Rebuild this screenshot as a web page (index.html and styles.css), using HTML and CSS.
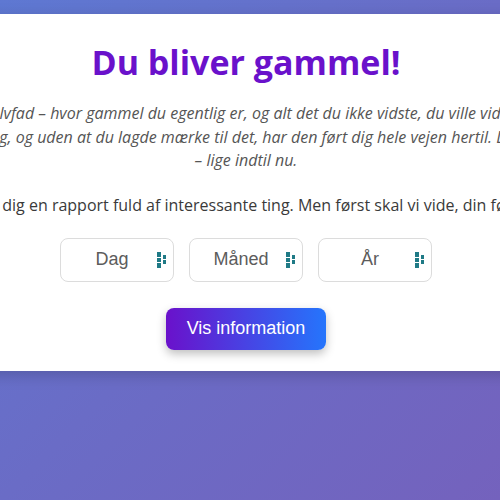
FILE: index.html
```html
<!DOCTYPE html>
<html lang="da">
<head>
<meta charset="utf-8">
<title>Du bliver gammel!</title>
<link rel="stylesheet" href="styles.css">
</head>
<body>
<main class="card">
  <h1 class="title">Du bliver gammel!</h1>
  <p class="intro">Tiden er et halvfad – hvor gammel du egentlig er, og alt det du ikke vidste, du ville vide om din tid.<br>Tiden gik sin stille gang, og uden at du lagde mærke til det, har den ført dig hele vejen hertil. Dag for dag, år for år<br>– lige indtil nu.</p>
  <p class="lead">Så vil vi give dig en rapport fuld af interessante ting. Men først skal vi vide, din fødselsdato.</p>
  <div class="fields">
    <div class="select"><span class="label">Dag</span><svg class="arrow" width="10" height="16" viewBox="0 0 10 16"><rect x="0" y="0" width="4" height="5"/><rect x="0" y="6" width="4" height="4"/><rect x="0" y="11" width="4" height="5"/><rect x="6" y="3" width="3" height="4"/><rect x="6" y="8" width="3" height="4"/></svg></div>
    <div class="select"><span class="label">Måned</span><svg class="arrow" width="10" height="16" viewBox="0 0 10 16"><rect x="0" y="0" width="4" height="5"/><rect x="0" y="6" width="4" height="4"/><rect x="0" y="11" width="4" height="5"/><rect x="6" y="3" width="3" height="4"/><rect x="6" y="8" width="3" height="4"/></svg></div>
    <div class="select"><span class="label">År</span><svg class="arrow" width="10" height="16" viewBox="0 0 10 16"><rect x="0" y="0" width="4" height="5"/><rect x="0" y="6" width="4" height="4"/><rect x="0" y="11" width="4" height="5"/><rect x="6" y="3" width="3" height="4"/><rect x="6" y="8" width="3" height="4"/></svg></div>
  </div>
  <button class="btn" type="button">Vis information</button>
</main>
</body>
</html>
```

FILE: styles.css
```css
html, body {
  margin: 0;
  padding: 0;
  height: 100%;
  overflow: hidden;
}
body {
  background: linear-gradient(135deg, #5e78d2 0%, #6a6cc6 50%, #7462bd 100%);
  display: flex;
  justify-content: center;
  align-items: flex-start;
  padding-top: 14px;
  box-sizing: border-box;
  font-family: "Open Sans", "Noto Sans", sans-serif;
}
.card {
  flex: 0 0 900px;
  width: 900px;
  margin-right: 8px;
  background: #fff;
  box-sizing: border-box;
  padding: 25px 0 21px;
  text-align: center;
  box-shadow: 0 4px 14px rgba(0, 0, 0, 0.18);
  display: flex;
  flex-direction: column;
  align-items: center;
}
.title {
  margin: 0;
  font-family: "Open Sans", sans-serif;
  font-size: 34px;
  line-height: 46px;
  font-weight: 700;
  color: #6a11cb;
}
.intro {
  margin: 17px 0 0;
  font-size: 16px;
  line-height: 23.5px;
  font-style: italic;
  color: #555;
  white-space: nowrap;
}
.lead {
  margin: 20px 0 0;
  font-size: 16px;
  line-height: 24px;
  color: #3a3a3a;
  white-space: nowrap;
}
.fields {
  display: flex;
  gap: 15px;
  margin-top: 21px;
}
.select {
  width: 114px;
  height: 44px;
  box-sizing: border-box;
  border: 1px solid #dcdcdc;
  border-radius: 8px;
  display: flex;
  align-items: center;
  padding: 0 6px 0 6px;
  font-family: "Liberation Sans", Arial, sans-serif;
  font-size: 18px;
  color: #5c5c5c;
}
.label {
  flex: 1;
  text-align: center;
}
.arrow {
  fill: #1f7a86;
}
.btn {
  margin-top: 26px;
  width: 160px;
  height: 42px;
  border: none;
  border-radius: 8px;
  background: linear-gradient(90deg, #6a11cb, #2575fc);
  color: #fff;
  font-family: "Liberation Sans", Arial, sans-serif;
  font-size: 18px;
  box-shadow: 0 4px 10px rgba(0, 0, 0, 0.25);
  cursor: pointer;
}
```
